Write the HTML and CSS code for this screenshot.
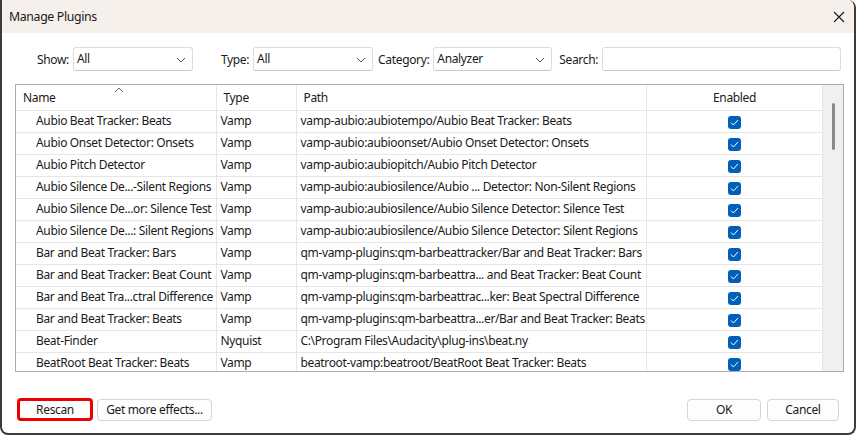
FILE: index.html
```html
<!DOCTYPE html>
<html lang="en">
<head>
  <meta charset="UTF-8">
  <title>Manage Plugins</title>
  <link rel="stylesheet" href="styles.css">
</head>
<body>
  <div class="window">
    <div class="titlebar">
      <span class="title">Manage Plugins</span>
      <svg class="close" width="12" height="12" viewBox="0 0 12 12"><path d="M1 1 L11 11 M11 1 L1 11" stroke="#1a1a1a" stroke-width="1.1" fill="none"/></svg>
    </div>

    <div class="content">
      <div class="filters">
        <label class="lbl">Show:</label>
        <div class="combo w120">All<svg class="chev" width="10" height="6" viewBox="0 0 10 6"><path d="M1 1 L5 5 L9 1" stroke="#555" fill="none"/></svg></div>
        <label class="lbl gap-l">Type:</label>
        <div class="combo w120">All<svg class="chev" width="10" height="6" viewBox="0 0 10 6"><path d="M1 1 L5 5 L9 1" stroke="#555" fill="none"/></svg></div>
        <label class="lbl gap-s">Category:</label>
        <div class="combo w119">Analyzer<svg class="chev" width="10" height="6" viewBox="0 0 10 6"><path d="M1 1 L5 5 L9 1" stroke="#555" fill="none"/></svg></div>
        <label class="lbl gap-m">Search:</label>
        <div class="search"></div>
      </div>

      <div class="grid">
        <div class="table-wrap">
          <table>
            <colgroup>
              <col class="c-name"><col class="c-type"><col class="c-path"><col class="c-en">
            </colgroup>
            <thead>
              <tr>
                <th class="h-name">Name<svg class="sort" width="10" height="6" viewBox="0 0 10 6"><path d="M1 5 L5 1 L9 5" stroke="#666" fill="none"/></svg></th>
                <th>Type</th>
                <th>Path</th>
                <th class="center">Enabled</th>
              </tr>
            </thead>
            <tbody id="rows"></tbody>
          </table>
        </div>
        <div class="scrollbar"><div class="thumb"></div></div>
      </div>

      <div class="buttons">
        <button class="btn rescan">Rescan</button>
        <button class="btn more">Get more effects...</button>
        <span class="spacer"></span>
        <button class="btn ok">OK</button>
        <button class="btn cancel">Cancel</button>
      </div>
    </div>
  </div>

  <script>
    const plugins = [
      ["Aubio Beat Tracker: Beats", "Vamp", "vamp-aubio:aubiotempo/Aubio Beat Tracker: Beats"],
      ["Aubio Onset Detector: Onsets", "Vamp", "vamp-aubio:aubioonset/Aubio Onset Detector: Onsets"],
      ["Aubio Pitch Detector", "Vamp", "vamp-aubio:aubiopitch/Aubio Pitch Detector"],
      ["Aubio Silence De...-Silent Regions", "Vamp", "vamp-aubio:aubiosilence/Aubio ... Detector: Non-Silent Regions"],
      ["Aubio Silence De...or: Silence Test", "Vamp", "vamp-aubio:aubiosilence/Aubio Silence Detector: Silence Test"],
      ["Aubio Silence De...: Silent Regions", "Vamp", "vamp-aubio:aubiosilence/Aubio Silence Detector: Silent Regions"],
      ["Bar and Beat Tracker: Bars", "Vamp", "qm-vamp-plugins:qm-barbeattracker/Bar and Beat Tracker: Bars"],
      ["Bar and Beat Tracker: Beat Count", "Vamp", "qm-vamp-plugins:qm-barbeattra... and Beat Tracker: Beat Count"],
      ["Bar and Beat Tra...ctral Difference", "Vamp", "qm-vamp-plugins:qm-barbeattrac...ker: Beat Spectral Difference"],
      ["Bar and Beat Tracker: Beats", "Vamp", "qm-vamp-plugins:qm-barbeattra...er/Bar and Beat Tracker: Beats"],
      ["Beat-Finder", "Nyquist", "C:\\Program Files\\Audacity\\plug-ins\\beat.ny"],
      ["BeatRoot Beat Tracker: Beats", "Vamp", "beatroot-vamp:beatroot/BeatRoot Beat Tracker: Beats"]
    ];

    const check = '<span class="check"><svg width="9" height="7" viewBox="0 0 9 7"><path d="M1 3.5 L3.4 6 L8 1" stroke="#fff" stroke-width="1" fill="none"/></svg></span>';
    const tbody = document.getElementById("rows");
    plugins.forEach(p => {
      const tr = document.createElement("tr");
      tr.innerHTML = `<td class="name">${p[0]}</td><td>${p[1]}</td><td>${p[2]}</td><td class="center">${check}</td>`;
      tbody.appendChild(tr);
    });
  </script>
</body>
</html>
```

FILE: styles.css
```css
html, body { margin: 0; padding: 0; }
body { background: #fff; font-family: "Segoe UI", "Noto Sans", sans-serif; font-size: 12px; letter-spacing: -0.35px; color: #1a1a1a; }

.window { width: 856px; height: 435px; border: 1px solid #3b3b3b; border-top: none; border-left-width: 2px; border-right-width: 2px; border-bottom-width: 2px; border-radius: 0 8px 8px 8px; overflow: hidden; background: #fff; box-sizing: border-box; }

.titlebar { height: 33px; background: #f6f0ed; display: flex; align-items: center; padding: 0 0 0 7px; }
.title { font-size: 12.3px; flex: 1; }
.close { margin-right: 9px; }

.content { padding: 14px 12px 0 13px; }

.filters { display: flex; align-items: center; height: 24px; padding-left: 22px; }
.lbl { margin-right: 4px; }
.gap-l { margin-left: 28px; }
.gap-s { margin-left: 5px; }
.gap-m { margin-left: 7px; }
.combo { position: relative; line-height: 22px; border: 1px solid #dcdcdc; border-bottom-color: #c8c8c8; border-radius: 3px; padding-left: 3px; box-sizing: border-box; height: 24px; }
.w120 { width: 120px; }
.w119 { width: 119px; }
.chev { position: absolute; right: 6px; top: 9px; }
.search { width: 239px; height: 24px; border: 1px solid #dcdcdc; border-bottom-color: #c8c8c8; border-radius: 3px; box-sizing: border-box; }

.grid { margin-top: 13px; display: flex; border: 1px solid #acacac; height: 288px; box-sizing: border-box; overflow: hidden; width: 829px; }
.table-wrap { width: 807px; overflow: hidden; }
table { border-collapse: collapse; table-layout: fixed; width: 807px; }
.c-name { width: 200px; }
.c-type { width: 80px; }
.c-path { width: 350px; }
.c-en { width: 177px; }
th { height: 25px; font-weight: normal; text-align: left; padding: 0 0 0 7px; border-right: 1px solid #e6e6e6; border-bottom: 1px solid #e6e6e6; box-sizing: border-box; position: relative; white-space: nowrap; }
td { height: 22px; padding: 0 0 1px 4px; border-right: 1px solid #e6e6e6; border-bottom: 1px solid #e6e6e6; box-sizing: border-box; white-space: nowrap; overflow: hidden; }
td.name { padding-left: 20px; }
th.center, td.center { text-align: center; padding: 0; }
.sort { position: absolute; left: 98px; top: 2px; }

.check { display: inline-block; width: 13px; height: 13px; background: #005fb8; border-radius: 3px; vertical-align: middle; text-align: center; line-height: 11px; }
.check svg { vertical-align: middle; }

.scrollbar { width: 20px; background: #f0f0f0; border-left: 1px solid #e6e6e6; position: relative; }
.thumb { position: absolute; left: 9px; top: 18px; width: 3px; height: 47px; background: #8a8a8a; border-radius: 2px; }

.buttons { display: flex; align-items: center; margin-top: 26px; padding-left: 2px; }
.btn { font-family: inherit; font-size: 12px; letter-spacing: -0.35px; color: #1a1a1a; background: #fdfdfd; border: 1px solid #d5d5d5; border-radius: 4px; height: 22px; padding: 0; box-sizing: border-box; }
.rescan { width: 76px; height: 23px; border: 3px solid #ee0000; border-radius: 4px; }
.more { width: 115px; margin-left: 4px; }
.spacer { flex: 1; }
.ok { width: 74px; }
.cancel { width: 72px; margin-left: 6px; margin-right: 3px; }
```
